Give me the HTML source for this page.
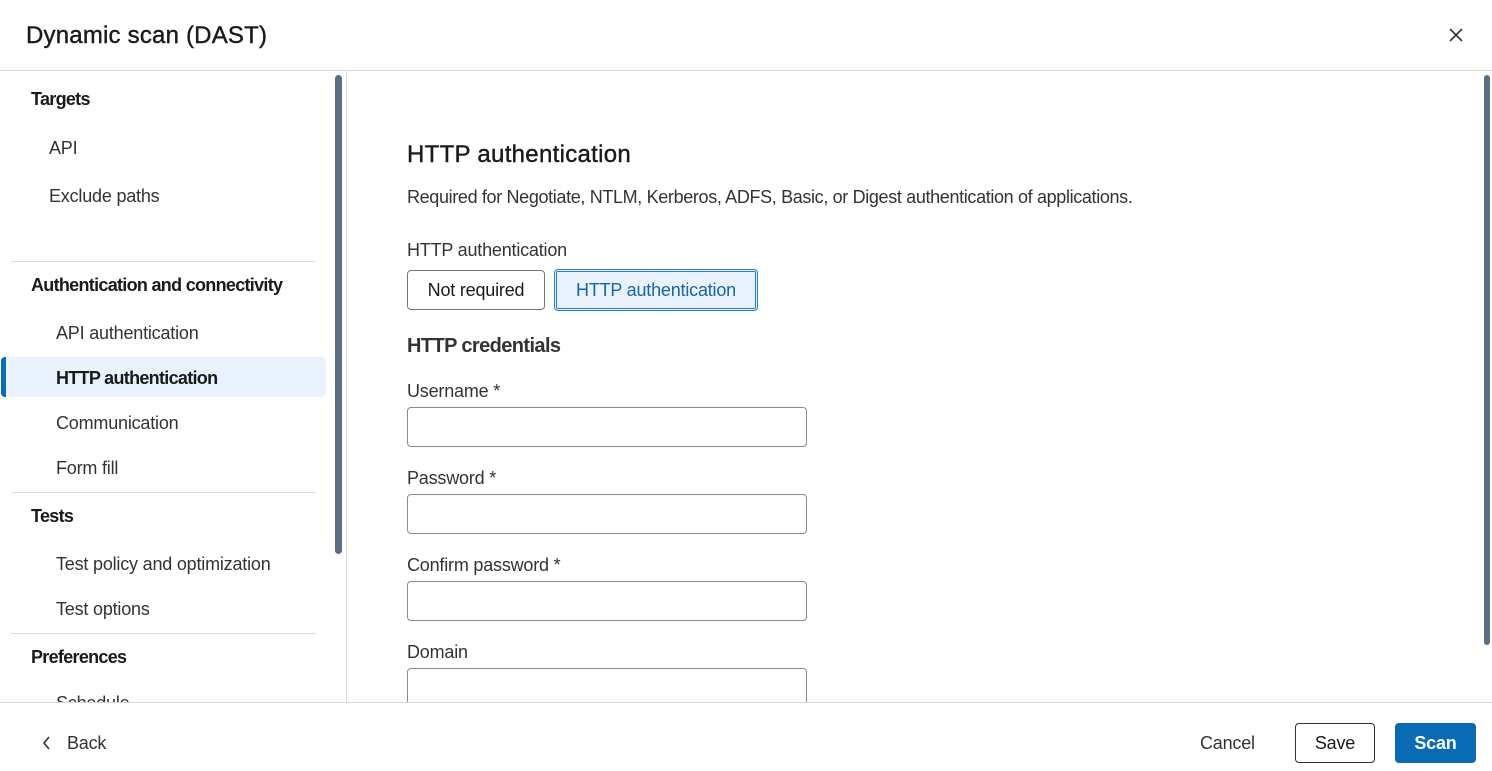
<!DOCTYPE html>
<html><head><style>
*{box-sizing:border-box;margin:0;padding:0}
body{width:1492px;height:771px;overflow:hidden;background:#fff;font-family:"Liberation Sans",sans-serif;color:#1d1d1d;position:relative;letter-spacing:-0.2px}
.abs{position:absolute}
.hdr{left:0;top:0;width:1492px;height:71px;border-bottom:1px solid #d6d6d6}
.title{left:26px;top:22px;font-size:24px;color:#1a1a1a;letter-spacing:0.2px;-webkit-text-stroke:0.4px #1a1a1a}
.nav{font-size:18px;position:absolute;white-space:nowrap}
.sec{font-size:18px;font-weight:bold;color:#1a1a1a;position:absolute;letter-spacing:-0.7px;white-space:nowrap}
.hr{position:absolute;left:11px;width:305px;height:1px;background:#ddd}
.lbl{position:absolute;left:407px;font-size:18px;color:#333;white-space:nowrap}
.inp{position:absolute;left:407px;width:400px;height:40px;border:1px solid #8a8a8a;border-radius:4px}
.btn{position:absolute;font-size:18px;border-radius:4px;text-align:center}
</style></head><body>
<div class="abs hdr"></div>
<div class="abs title">Dynamic scan (DAST)</div>
<svg class="abs" style="left:1449px;top:28px" width="14" height="14" viewBox="0 0 14 14"><path d="M1 1L13 13M13 1L1 13" stroke="#333" stroke-width="1.6"/></svg>

<div class="sec" style="left:31px;top:89px">Targets</div>
<div class="nav" style="left:49px;top:138px;color:#333">API</div>
<div class="nav" style="left:49px;top:186px;color:#333">Exclude paths</div>
<div class="hr" style="top:261px"></div>
<div class="sec" style="left:31px;top:275px">Authentication and connectivity</div>
<div class="nav" style="left:56px;top:323px;color:#333">API authentication</div>
<div class="abs" style="left:1px;top:357px;width:325px;height:40px;background:#eaf3fd;border-radius:4px;border-left:5px solid #0a6bb5"></div>
<div class="sec" style="left:56px;top:368px">HTTP authentication</div>
<div class="nav" style="left:56px;top:413px;color:#333">Communication</div>
<div class="nav" style="left:56px;top:458px;color:#333">Form fill</div>
<div class="hr" style="top:492px"></div>
<div class="sec" style="left:31px;top:506px">Tests</div>
<div class="nav" style="left:56px;top:554px;color:#333">Test policy and optimization</div>
<div class="nav" style="left:56px;top:599px;color:#333">Test options</div>
<div class="hr" style="top:633px"></div>
<div class="sec" style="left:31px;top:647px">Preferences</div>
<div class="nav" style="left:56px;top:693px;color:#333">Schedule</div>
<div class="abs" style="left:335px;top:75px;width:7px;height:479px;background:#5a6f82;border-radius:4px"></div>
<div class="abs" style="left:346px;top:71px;width:1px;height:632px;background:#ddd"></div>
<div class="abs" style="left:1484px;top:75px;width:6px;height:570px;background:#5a6f82;border-radius:3px"></div>

<div class="abs" style="left:407px;top:141px;font-size:24px;color:#1a1a1a;letter-spacing:0.3px;-webkit-text-stroke:0.4px #1a1a1a">HTTP authentication</div>
<div class="lbl" style="top:187px;letter-spacing:-0.35px">Required for Negotiate, NTLM, Kerberos, ADFS, Basic, or Digest authentication of applications.</div>
<div class="lbl" style="top:240px">HTTP authentication</div>
<div class="btn" style="left:407px;top:270px;width:138px;height:40px;border:1px solid #777;line-height:38px;color:#1a1a1a">Not required</div>
<div class="btn" style="left:554px;top:269px;width:204px;height:42px;border:3px double #2b7cbf;background:#eaf3fd;line-height:36px;color:#1565a8">HTTP authentication</div>
<div class="abs" style="left:407px;top:335px;font-size:20px;font-weight:bold;color:#333;letter-spacing:-0.6px">HTTP credentials</div>
<div class="lbl" style="top:381px">Username *</div>
<div class="inp" style="top:407px"></div>
<div class="lbl" style="top:468px">Password *</div>
<div class="inp" style="top:494px"></div>
<div class="lbl" style="top:555px">Confirm password *</div>
<div class="inp" style="top:581px"></div>
<div class="lbl" style="top:642px">Domain</div>
<div class="inp" style="top:668px"></div>

<div class="abs" style="left:0;top:702px;width:1492px;height:69px;background:#fff;border-top:1px solid #d6d6d6"></div>
<svg class="abs" style="left:42px;top:736px" width="10" height="14" viewBox="0 0 10 14"><path d="M7 1L2 7L7 13" stroke="#333" stroke-width="1.6" fill="none"/></svg>
<div class="abs" style="left:67px;top:733px;font-size:18px;color:#333">Back</div>
<div class="abs" style="left:1200px;top:733px;font-size:18px;color:#333">Cancel</div>
<div class="btn" style="left:1295px;top:723px;width:80px;height:40px;border:1px solid #333;line-height:38px;color:#1a1a1a">Save</div>
<div class="btn" style="left:1395px;top:723px;width:81px;height:40px;background:#0a6bb5;line-height:40px;color:#fff;font-weight:bold">Scan</div>
</body></html>
